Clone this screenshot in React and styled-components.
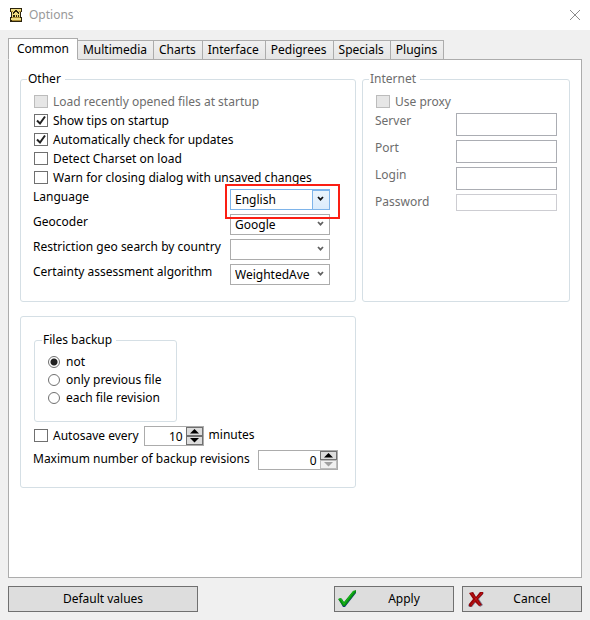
import React, { useState } from "react";
import styled, { createGlobalStyle, css } from "styled-components";

const Global = createGlobalStyle`
  *, *::before, *::after { box-sizing: border-box; }
  body { margin: 0; background: #f0f0f0; }
  body, button, input, select {
    font-family: "Noto Sans", "Open Sans", sans-serif;
    font-size: 12px;
    line-height: 18px;
    color: #000;
  }
`;

const Window = styled.div`
  display: flex;
  flex-direction: column;
  min-height: 100vh;
`;

const TitleBar = styled.header`
  display: flex;
  align-items: center;
  height: 30px;
  padding: 0 9px;
  background: #fff;
  color: #999;
`;

const Title = styled.h1`
  flex: 1;
  margin: 0 0 0 6px;
  font-size: 12px;
  font-weight: 400;
`;

const CloseButton = styled.button`
  display: flex;
  padding: 0;
  border: 0;
  background: none;
`;

const Main = styled.main`
  flex: 1;
  display: flex;
  flex-direction: column;
  padding: 8px 8px 0;
`;

const TabList = styled.div`
  display: flex;
  align-items: flex-end;
  margin-bottom: -1px;
`;

const Tab = styled.button`
  height: 20px;
  padding: 0 6px 0 5px;
  margin-left: -1px;
  border: 1px solid #acacac;
  background: linear-gradient(#f0f0f0, #e5e5e5);
  white-space: nowrap;
  ${(p) =>
    p["aria-selected"] &&
    css`
      height: 22px;
      padding: 0 8px;
      margin-left: 0;
      border-bottom-color: #fff;
      background: #fff;
      z-index: 1;
    `}
`;

const Panel = styled.section`
  flex: 1;
  padding: 10px 11px;
  border: 1px solid #acacac;
  background: #fff;
`;

const Columns = styled.div`
  display: grid;
  grid-template-columns: 21fr 13fr;
  column-gap: 6px;
  row-gap: 14px;
`;

const Group = styled.fieldset`
  min-width: 0;
  margin: 0;
  padding: 4px 12px 16px;
  border: 1px solid #d5dfe5;
  border-radius: 3px;
  color: ${(p) => (p.$muted ? "#6d6d6d" : "#000")};
`;

const BackupBox = styled.div`
  padding: 14px 12px 13px;
  border: 1px solid #d5dfe5;
  border-radius: 3px;
`;

const BackupGroup = styled(Group)`
  width: 143px;
  margin: 0 0 4px 1px;
  padding: 4px 12px 14px 13px;
`;

const Legend = styled.legend`
  margin-left: -6px;
  padding: 0 4px 0 1px;
`;

const CheckLabel = styled.label`
  display: flex;
  align-items: center;
  gap: 5px;
  height: 19px;
  padding-left: 1px;
  white-space: nowrap;
  color: ${(p) => (p.$muted ? "#6d6d6d" : "inherit")};
`;

const CheckFace = styled.span`
  display: grid;
  width: 14px;
  height: 13px;
`;

const CheckInput = styled.input`
  grid-area: 1 / 1;
  appearance: none;
  width: 14px;
  height: 13px;
  margin: 0;
  border: 1px solid #707070;
  background: #fff;
  &:disabled { border-color: #bcbcbc; background: #e6e6e6; }
  & + svg { grid-area: 1 / 1; visibility: hidden; pointer-events: none; }
  &:checked + svg { visibility: visible; }
`;

const RadioLabel = styled.label`
  display: flex;
  align-items: center;
  gap: 6px;
  height: 18px;
  white-space: nowrap;
`;

const RadioInput = styled.input`
  appearance: none;
  width: 12px;
  height: 12px;
  margin: 0;
  border: 1px solid #707070;
  border-radius: 50%;
  background: #fff;
  &:checked { background: radial-gradient(circle, #222 0 3px, #fff 4px); }
`;

const FieldGrid = styled.div`
  display: grid;
  grid-template-columns: 1fr ${(p) => p.$control};
  row-gap: 4px;
  margin-top: 2px;
  padding-right: ${(p) => p.$right};
  line-height: 16px;
  white-space: nowrap;
`;

const SelectBox = styled.div`
  position: relative;
  display: flex;
  & > svg { position: absolute; top: 7px; right: 6px; pointer-events: none; }
`;

const Select = styled.select`
  appearance: none;
  width: 100%;
  height: 21px;
  padding: 0 19px 0 4px;
  border: 1px solid ${(p) => (p.$active ? "#7eb4ea" : "#acacac")};
  border-radius: 0;
  background: #fff;
  outline: 0;
`;

const ArrowFace = styled.span`
  position: absolute;
  top: 1px;
  right: 0;
  width: 18px;
  height: 20px;
  border: 1px solid #7eb4ea;
  background: linear-gradient(#ebf4fc, #dcecfc);
  pointer-events: none;
`;

const Highlight = styled.span`
  position: absolute;
  inset: -5px -10px -9px -5px;
  border: 2px solid #fb1e13;
  pointer-events: none;
  z-index: 2;
`;

const TextInput = styled.input`
  width: 100%;
  height: ${(p) => (p.$short ? "17px" : "23px")};
  padding: 0 4px;
  border: 1px solid ${(p) => (p.$short ? "#cdcdd2" : "#abadb3")};
  background: #fff;
`;

const Line = styled.div`
  display: flex;
  align-items: flex-start;
  gap: ${(p) => p.$gap};
  margin-bottom: 4px;
  white-space: nowrap;
`;

const SpinBox = styled.span`
  display: flex;
  width: ${(p) => p.$width};
  height: 20px;
  border: 1px solid #acacac;
`;

const SpinInput = styled.input`
  flex: 1;
  min-width: 0;
  padding: 2px 3px 0 0;
  border: 0;
  background: #fff;
  text-align: right;
`;

const SpinButtons = styled.span`
  display: flex;
  flex-direction: column;
  width: 17px;
`;

const SpinButton = styled.button`
  flex: 1;
  display: flex;
  align-items: center;
  justify-content: center;
  min-height: 0;
  padding: 0;
  border: 1px solid #707070;
  background: #ddd;
  color: #000;
  &:disabled { border-color: #bcbcbc; background: #f0f0f0; color: #a0a0a0; }
`;

const Footer = styled.footer`
  display: flex;
  gap: 8px;
  padding: 8px;
`;

const PushButton = styled.button`
  display: flex;
  align-items: center;
  width: ${(p) => p.$width};
  height: 26px;
  padding: 0 2px;
  border: 1px solid #707070;
  background: #ddd;
  &:first-child { margin-right: auto; }
`;

const ButtonText = styled.span`
  flex: 1;
  text-align: center;
`;

const AppIcon = () => (
  <svg width="14" height="14" viewBox="0 0 14 14" shapeRendering="crispEdges" aria-hidden="true">
    <path fill="#2b230c" d="M1 0h12v4h-1v5h1v5H1V9h1V4H1z" />
    <path fill="#f0dc82" d="M2 1h10v2H2zM3 3h8v6H3zM2 10h10v2H2z" />
    <path fill="#2b230c" d="M6 2h2v1h1v1h1v2H9V5H8V4H6v1H5v1H4V4h1V3h1zM4 7h2v2H4zM7 7h1v2H7zM9 7h1v2H9z" />
    <path fill="#a88a34" d="M2 3h2v1H2zM10 3h2v1h-2zM3 12h9v1H3zM3 9h8v1H3z" />
  </svg>
);

const CloseIcon = () => (
  <svg width="12" height="12" viewBox="0 0 12 12" aria-hidden="true">
    <path d="M1 1l10 10M11 1L1 11" stroke="#8c8c8c" fill="none" />
  </svg>
);

const Tick = () => (
  <svg width="14" height="13" viewBox="0 0 14 13" aria-hidden="true">
    <path d="M3 6.5l3 3 5-7" fill="none" stroke="#212121" strokeWidth="2" />
  </svg>
);

const Chevron = ({ color }) => (
  <svg width="7" height="6" viewBox="0 0 7 6" aria-hidden="true">
    <path d="M1 1l2.5 2.7L6 1" fill="none" stroke={color} strokeWidth="1.7" />
  </svg>
);

const Triangle = ({ down }) => (
  <svg width="9" height="5" viewBox="0 0 9 5" aria-hidden="true">
    <path d={down ? "M0 0h9L4.500 4.500z" : "M0 4.500h9L4.500 0z"} fill="currentColor" />
  </svg>
);

const ApplyIcon = () => (
  <svg width="20" height="18" viewBox="0 0 20 18" aria-hidden="true">
    <path d="M2 10l3-1 2 4L16 2l3-1v2L8 17H6z" fill="#123c78" />
    <path d="M1 9l3-1 3 4L16 1l3-1v2L8 16H6z" fill="#0a8f10" />
    <path d="M2 9l2 0 3 5L17 1" fill="none" stroke="#16b81c" strokeWidth="1.200" />
  </svg>
);

const CancelIcon = () => (
  <svg width="20" height="17" viewBox="-3 0 20 17" aria-hidden="true">
    <path d="M2 2l3-1 3 5 4-5 3 0 1 1-5 6 4 6-3 2-4-5-4 5-3 0-1-2 6-6z" fill="#7d7f96" />
    <path d="M1 2l4-1 3 5 4-5 3 0 0 2-5 5 4 6-3 1-4-4-4 5-2-1 0-2 4-5z" fill="#980508" />
    <path d="M3 2l5 6 4 6M14 2L8 8l-5 6" stroke="#c11518" fill="none" />
  </svg>
);

function Check({ label, checked, disabled }) {
  return (
    <CheckLabel $muted={disabled}>
      <CheckFace>
        <CheckInput type="checkbox" defaultChecked={checked} disabled={disabled} />
        <Tick />
      </CheckFace>
      {label}
    </CheckLabel>
  );
}

function SelectField({ id, label, value, active }) {
  return (
    <>
      <label htmlFor={id}>{label}</label>
      <SelectBox>
        <Select id={id} $active={active} defaultValue={value}>
          <option>{value}</option>
        </Select>
        {active && <ArrowFace />}
        <Chevron color={active ? "#111" : "#606060"} />
        {active && <Highlight />}
      </SelectBox>
    </>
  );
}

function Spinner({ id, label, initial, width }) {
  const [value, setValue] = useState(initial);
  return (
    <SpinBox $width={width}>
      <SpinInput
        id={id}
        aria-label={label}
        inputMode="numeric"
        value={value}
        onChange={(e) => setValue(Number(e.target.value) || 0)}
      />
      <SpinButtons>
        <SpinButton aria-label="Increase" onClick={() => setValue(value + 1)}>
          <Triangle />
        </SpinButton>
        <SpinButton aria-label="Decrease" disabled={value === 0} onClick={() => setValue(value - 1)}>
          <Triangle down />
        </SpinButton>
      </SpinButtons>
    </SpinBox>
  );
}

const tabs = ["Common", "Multimedia", "Charts", "Interface", "Pedigrees", "Specials", "Plugins"];

const choices = [
  { id: "language", label: "Language", value: "English", active: true },
  { id: "geocoder", label: "Geocoder", value: "Google" },
  { id: "country", label: "Restriction geo search by country", value: "" },
  { id: "algorithm", label: "Certainty assessment algorithm", value: "WeightedAverage" },
];

const proxyFields = ["Server", "Port", "Login", "Password"];
const backupModes = ["not", "only previous file", "each file revision"];

export default function App() {
  return (
    <Window>
      <Global />
      <TitleBar>
        <AppIcon />
        <Title>Options</Title>
        <CloseButton aria-label="Close">
          <CloseIcon />
        </CloseButton>
      </TitleBar>
      <Main>
        <TabList role="tablist">
          {tabs.map((name, i) => (
            <Tab key={name} role="tab" aria-selected={i === 0}>
              {name}
            </Tab>
          ))}
        </TabList>
        <Panel role="tabpanel">
          <Columns>
            <Group>
              <Legend>Other</Legend>
              <Check label="Load recently opened files at startup" disabled />
              <Check label="Show tips on startup" checked />
              <Check label="Automatically check for updates" checked />
              <Check label="Detect Charset on load" />
              <Check label="Warn for closing dialog with unsaved changes" />
              <FieldGrid $control="100px" $right="13px">
                {choices.map((c) => (
                  <SelectField key={c.id} {...c} />
                ))}
              </FieldGrid>
            </Group>
            <Group $muted>
              <Legend>Internet</Legend>
              <Check label="Use proxy" disabled />
              <FieldGrid $control="101px" $right="0">
                {proxyFields.map((name) => (
                  <React.Fragment key={name}>
                    <label htmlFor={name}>{name}</label>
                    <TextInput
                      id={name}
                      type={name === "Password" ? "password" : "text"}
                      $short={name === "Password"}
                      disabled
                    />
                  </React.Fragment>
                ))}
              </FieldGrid>
            </Group>
            <BackupBox>
              <BackupGroup>
                <Legend>Files backup</Legend>
                {backupModes.map((mode, i) => (
                  <RadioLabel key={mode}>
                    <RadioInput type="radio" name="backup" defaultChecked={i === 0} />
                    {mode}
                  </RadioLabel>
                ))}
              </BackupGroup>
              <Line $gap="5px">
                <Check label="Autosave every" />
                <Spinner label="Autosave interval" initial={10} width="60px" />
                <span>minutes</span>
              </Line>
              <Line $gap="8px">
                <label htmlFor="revisions">Maximum number of backup revisions</label>
                <Spinner id="revisions" initial={0} width="80px" />
              </Line>
            </BackupBox>
          </Columns>
        </Panel>
      </Main>
      <Footer>
        <PushButton $width="190px">
          <ButtonText>Default values</ButtonText>
        </PushButton>
        <PushButton $width="120px">
          <ApplyIcon />
          <ButtonText>Apply</ButtonText>
        </PushButton>
        <PushButton $width="120px">
          <CancelIcon />
          <ButtonText>Cancel</ButtonText>
        </PushButton>
      </Footer>
    </Window>
  );
}
